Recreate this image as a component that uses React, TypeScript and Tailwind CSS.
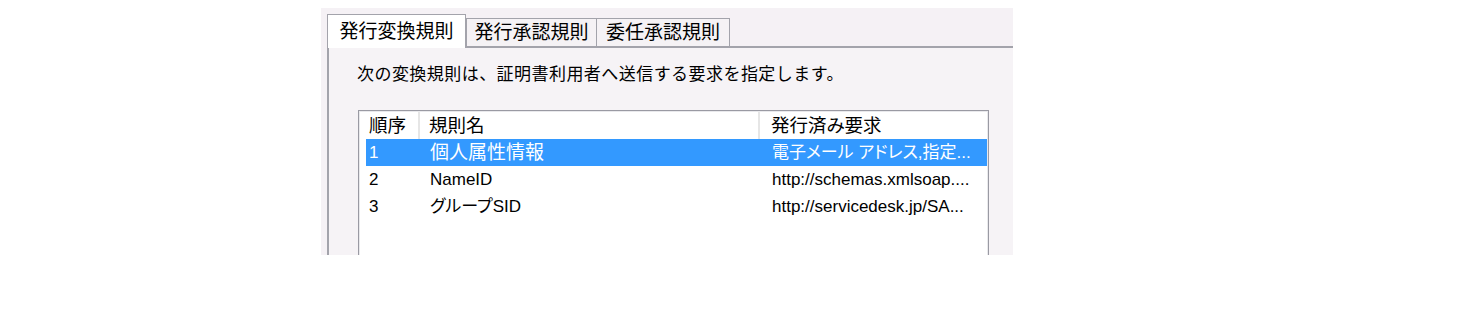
import React from "react";

const FONT = "[font-family:'Liberation_Sans','Noto_Sans_CJK_JP',sans-serif] [font-feature-settings:'palt']";

function Tab({ label, active, w }: { label: string; active?: boolean; w?: string }) {
  if (active) {
    return (
      <div className="relative z-10 -mb-[2px] flex h-[34px] w-[139px] items-center justify-center border-x border-t border-[#a3a3ab] bg-white pt-[2px] text-[19px] text-black">
        {label}
      </div>
    );
  }
  return (
    <div className={`flex h-[28px] ${w ?? "w-[131px]"} items-center justify-center border-t border-r border-[#a3a3ab] bg-[#f5f2f5] pt-[1px] text-[19px] text-black first:border-l`}>
      {label}
    </div>
  );
}

type Row = { no: string; name: React.ReactNode; value: React.ReactNode; selected?: boolean };

const rows: Row[] = [
  {
    no: "1",
    name: <span className="text-[19px]">個人属性情報</span>,
    value: (
      <>
        <span className="text-[17px]">電子メール アドレス</span>
        <span className="text-[17px]">,</span>
        <span className="text-[17px]">指定</span>
        <span className="text-[17px]">...</span>
      </>
    ),
    selected: true,
  },
  { no: "2", name: <span className="text-[17px]">NameID</span>, value: <span className="text-[17px]">http://schemas.xmlsoap....</span> },
  {
    no: "3",
    name: (
      <>
        <span className="text-[17px]">グループ</span>
        <span className="text-[17px]">SID</span>
      </>
    ),
    value: <span className="text-[17px]">http://servicedesk.jp/SA...</span>,
  },
];

export default function App() {
  return (
    <div className={`h-[318px] w-[1476px] bg-white pl-[321px] pt-[8px] ${FONT}`}>
      <div className="h-[247px] w-[692px] overflow-hidden bg-[#f5f1f5] pl-[6px] pt-[6px]">
        {/* tab strip */}
        <div className="flex h-[32px] items-end">
          <Tab label="発行変換規則" active />
          <div className="flex">
            <Tab label="発行承認規則" w="w-[131px]" />
            <Tab label="委任承認規則" w="w-[133px]" />
          </div>
        </div>
        {/* tab page */}
        <div className="h-[400px] border-l-2 border-t-2 border-[#a3a3ab] bg-[#f6f3f6] pl-[28px] pt-[15px]">
          <div className="h-[24px] text-[17px] leading-[24px] tracking-[0.45px] text-black [font-feature-settings:normal]">
            次の変換規則は、証明書利用者へ送信する要求を指定します。
          </div>
          <div className="mt-[23px] ml-[1px] w-[631px] border border-[#9a9aa3]">
            <div className="h-[300px] border border-[#e9e9ec] bg-white">
              {/* header */}
              <div className="flex h-[27px] items-center text-[18.5px] text-black">
                <div className="h-full w-[60px] border-r-2 border-[#e6e6e6] pl-[9px] leading-[27px]">順序</div>
                <div className="h-full w-[340px] border-r-2 border-[#e6e6e6] pl-[9px] leading-[27px]">規則名</div>
                <div className="h-full flex-1 pl-[11px] leading-[27px]">発行済み要求</div>
              </div>
              {rows.map((r) => (
                <div
                  key={r.no}
                  className={`ml-[6px] flex h-[27px] items-center leading-[27px] ${r.selected ? "bg-[#3399ff] text-white" : "text-black"}`}
                >
                  <div className="w-[54px] pl-[3px] text-[17px]">{r.no}</div>
                  <div className="w-[340px] whitespace-nowrap pl-[10px]">{r.name}</div>
                  <div className="flex-1 whitespace-nowrap pl-[12px]">{r.value}</div>
                </div>
              ))}
            </div>
          </div>
        </div>
      </div>
    </div>
  );
}
